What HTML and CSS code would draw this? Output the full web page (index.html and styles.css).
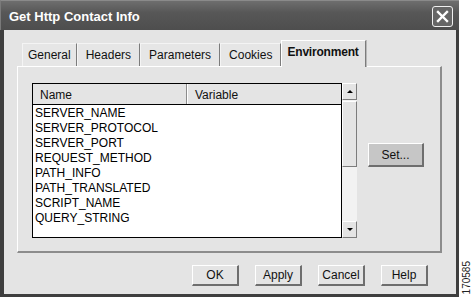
FILE: index.html
```html
<!DOCTYPE html>
<html lang="en">
<head>
    <meta charset="UTF-8">
    <title>Get Http Contact Info</title>
    <link rel="stylesheet" href="styles.css">
</head>
<body>
    <div class="window">
        <div class="titlebar">
            <span class="title">Get Http Contact Info</span>
            <button class="close-btn">
                <svg width="13" height="13" viewBox="0 0 13 13">
                    <path d="M2 2 L11 11 M11 2 L2 11" stroke="#fff" stroke-width="2.4" stroke-linecap="square"/>
                </svg>
            </button>
        </div>

        <div class="client">
            <div class="tabs">
                <div class="tab">General</div>
                <div class="tab">Headers</div>
                <div class="tab">Parameters</div>
                <div class="tab">Cookies</div>
                <div class="tab active">Environment</div>
            </div>

            <div class="panel">
                <div class="list-wrap">
                    <div class="list">
                        <div class="list-header">
                            <div class="col col-name">Name</div>
                            <div class="col col-var">Variable</div>
                        </div>
                        <div class="rows">
                            <div class="row">SERVER_NAME</div>
                            <div class="row">SERVER_PROTOCOL</div>
                            <div class="row">SERVER_PORT</div>
                            <div class="row">REQUEST_METHOD</div>
                            <div class="row">PATH_INFO</div>
                            <div class="row">PATH_TRANSLATED</div>
                            <div class="row">SCRIPT_NAME</div>
                            <div class="row">QUERY_STRING</div>
                        </div>
                    </div>
                    <div class="scrollbar">
                        <div class="sb-btn"><span class="arrow-up"></span></div>
                        <div class="sb-thumb"></div>
                        <div class="sb-track"></div>
                        <div class="sb-btn"><span class="arrow-down"></span></div>
                    </div>
                </div>
                <button class="button set-btn">Set...</button>
            </div>

            <div class="button-group">
                <button class="button">OK</button>
                <button class="button">Apply</button>
                <button class="button">Cancel</button>
                <button class="button">Help</button>
            </div>
        </div>
    </div>

    <div class="side-label">
        <span>170585</span>
    </div>
</body>
</html>
```

FILE: styles.css
```css
* {
    margin: 0;
    padding: 0;
    box-sizing: border-box;
    font-family: 'Liberation Sans', Arial, sans-serif;
}

body {
    background: #FFFFFF;
    display: flex;
    width: 473px;
    height: 300px;
    overflow: hidden;
}

.window {
    width: 459px;
    height: 297px;
    display: flex;
    flex-direction: column;
    background: #E4E4E4;
}

.titlebar {
    height: 30px;
    display: flex;
    align-items: center;
    justify-content: space-between;
    padding: 0 6px 0 8px;
    background: linear-gradient(#6E6E6E, #575757 40%, #4E4E4E);
    border-top: 1px solid #8A8A8A;
    border-left: 1px solid #7A7A7A;
}

.title {
    color: #FFFFFF;
    font-size: 13px;
    font-weight: bold;
    padding-top: 1px;
}

.close-btn {
    width: 21px;
    height: 21px;
    border: 1px solid #F0F0F0;
    border-radius: 3px;
    background: #666666;
    display: flex;
    align-items: center;
    justify-content: center;
    margin-top: 1px;
}

.client {
    flex: 1;
    border: 3px solid #3E3E3E;
    border-top: 0;
    border-left-width: 4px;
    padding: 10px 14px 0 13px;
    display: flex;
    flex-direction: column;
}

.tabs {
    display: flex;
    align-items: flex-end;
    height: 26px;
    padding-left: 5px;
    position: relative;
    z-index: 1;
}

.tab {
    height: 23px;
    padding: 4px 8px 0 8px;
    font-size: 12px;
    color: #111111;
    border-top: 1px solid #F4F4F4;
    border-left: 1px solid #F4F4F4;
    border-right: 1px solid #7C7C7C;
    box-shadow: 1px 0 0 #B8B8B8;
    background: #E6E6E6;
}

.tab:first-child {
    padding: 4px 5px 0 5px;
}

.tab.active {
    height: 27px;
    margin-bottom: -1px;
    padding: 4px 6px 0 5px;
    font-weight: bold;
    letter-spacing: -0.2px;
    background: #E4E4E4;
    border-top: 1px solid #FFFFFF;
    border-left: 1px solid #FFFFFF;
}

.panel {
    height: 187px;
    border-top: 1px solid #FFFFFF;
    border-left: 1px solid #FFFFFF;
    border-right: 2px solid #8C8C8C;
    border-bottom: 2px solid #8C8C8C;
    padding: 16px 0 0 14px;
    display: flex;
    align-items: flex-start;
}

.list-wrap {
    display: flex;
    height: 155px;
}

.list {
    width: 310px;
    height: 155px;
    border: 1px solid #000000;
    background: #FFFFFF;
}

.list-header {
    display: flex;
    height: 21px;
    background: #E4E4E4;
    border-bottom: 1px solid #000000;
}

.col {
    font-size: 12px;
    color: #111111;
    padding: 4px 0 0 7px;
}

.col-name {
    width: 154px;
    border-right: 1px solid #8C8C8C;
}

.col-var {
    flex: 1;
    border-left: 1px solid #FFFFFF;
}

.rows {
    padding: 1px 0 0 2px;
}

.row {
    font-size: 12px;
    line-height: 15px;
    color: #000000;
}

.scrollbar {
    width: 15px;
    display: flex;
    flex-direction: column;
    background: #F2F2F2;
}

.sb-btn {
    height: 17px;
    background: #E4E4E4;
    border-top: 1px solid #FFFFFF;
    border-left: 1px solid #FFFFFF;
    border-right: 1px solid #7C7C7C;
    border-bottom: 1px solid #7C7C7C;
    display: flex;
    align-items: center;
    justify-content: center;
}

.sb-thumb {
    height: 66px;
    margin-top: 1px;
    background: #E4E4E4;
    border-top: 1px solid #FFFFFF;
    border-left: 1px solid #FFFFFF;
    border-right: 1px solid #7C7C7C;
    border-bottom: 1px solid #7C7C7C;
}

.sb-track {
    flex: 1;
}

.arrow-up {
    width: 0;
    height: 0;
    border-left: 3px solid transparent;
    border-right: 3px solid transparent;
    border-bottom: 3px solid #000000;
}

.arrow-down {
    width: 0;
    height: 0;
    border-left: 3px solid transparent;
    border-right: 3px solid transparent;
    border-top: 3px solid #000000;
}

.button {
    width: 47px;
    height: 21px;
    font-size: 12px;
    color: #111111;
    background: #E4E4E4;
    border-top: 1px solid #FFFFFF;
    border-left: 1px solid #FFFFFF;
    border-right: 2px solid #6E6E6E;
    border-bottom: 2px solid #6E6E6E;
}

.set-btn {
    width: 56px;
    height: 24px;
    margin: 60px 0 0 11px;
    background: #C6C6C6;
}

.button-group {
    display: flex;
    justify-content: flex-end;
    gap: 16px;
    margin-top: 12px;
    padding-right: 14px;
}

.side-label {
    flex: 1;
    display: flex;
    flex-direction: column;
    justify-content: flex-end;
    align-items: center;
    padding-bottom: 6px;
}

.side-label span {
    writing-mode: vertical-rl;
    transform: rotate(180deg);
    font-size: 10px;
    color: #222222;
}
```
